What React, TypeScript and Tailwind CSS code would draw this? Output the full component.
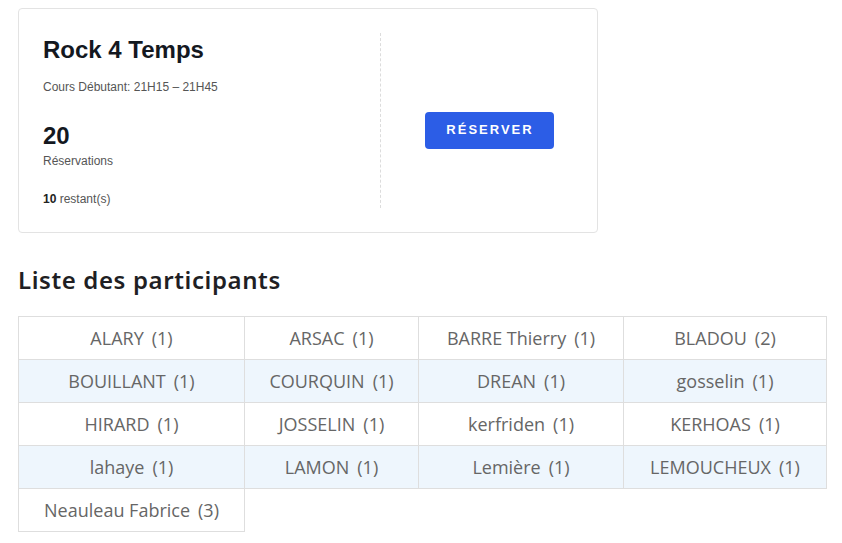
import React from 'react';

const participants: [string, number][] = [
  ['ALARY', 1],
  ['ARSAC', 1],
  ['BARRE Thierry', 1],
  ['BLADOU', 2],
  ['BOUILLANT', 1],
  ['COURQUIN', 1],
  ['DREAN', 1],
  ['gosselin', 1],
  ['HIRARD', 1],
  ['JOSSELIN', 1],
  ['kerfriden', 1],
  ['KERHOAS', 1],
  ['lahaye', 1],
  ['LAMON', 1],
  ['Lemière', 1],
  ['LEMOUCHEUX', 1],
  ['Neauleau Fabrice', 3],
];

const rows: [string, number][][] = [];
for (let i = 0; i < participants.length; i += 4) {
  rows.push(participants.slice(i, i + 4));
}

const App = () => {
  return (
    <div className="min-h-[543px] bg-white pl-[18px] pt-[8px] font-['Liberation_Sans',Arial,sans-serif]">
      {/* Course card */}
      <div className="flex w-[580px] h-[225px] rounded border border-[#e3e3e3] bg-white py-6 pl-6">
        <div className="w-[337px] flex flex-col">
          <h2 className="mt-[3px] text-[24px] leading-[1.2] font-bold text-[#14181f]">Rock 4 Temps</h2>
          <p className="mt-[13px] text-[12px] leading-[18px] text-[#555]">Cours Débutant: 21H15 – 21H45</p>
          <div className="mt-[26px] text-[24px] leading-[1.2] font-bold text-[#14181f]">20</div>
          <p className="mt-[1px] text-[12px] leading-[18px] text-[#555]">Réservations</p>
          <p className="mt-[20px] text-[12px] leading-[18px] text-[#555]">
            <span className="font-bold text-[#222]">10</span> restant(s)
          </p>
        </div>
        <div className="flex flex-1 items-center justify-center border-l border-dashed border-[#dcdcdc]">
          <button className="mt-[19px] flex w-[129px] h-[37px] items-center justify-center rounded bg-[#2c5de6] pl-[2px] text-[13px] font-bold tracking-[2px] text-white">
            RÉSERVER
          </button>
        </div>
      </div>

      {/* Participants */}
      <h3 className="mt-[31px] text-[24px] leading-[1.3] font-semibold tracking-[0.6px] text-[#1f1f24] font-['Noto_Sans',sans-serif]">
        Liste des participants
      </h3>

      <table className="mt-[21px] w-[808px] table-fixed border-collapse font-['Open_Sans',sans-serif] text-[18px] text-[#666]">
        <colgroup>
          <col className="w-[226px]" />
          <col className="w-[174px]" />
          <col className="w-[205px]" />
          <col className="w-[203px]" />
        </colgroup>
        <tbody>
          {rows.map((row, r) => (
            <tr key={r} className={r % 2 === 1 ? 'bg-[#eef6fd]' : 'bg-white'}>
              {row.map(([name, n]) => (
                <td key={name} className="h-[43px] border border-[#dedede] p-0 text-center align-middle bg-inherit">
                  {name}
                  <span className="ml-[8px]">({n})</span>
                </td>
              ))}
            </tr>
          ))}
        </tbody>
      </table>
    </div>
  );
};

export default App;
